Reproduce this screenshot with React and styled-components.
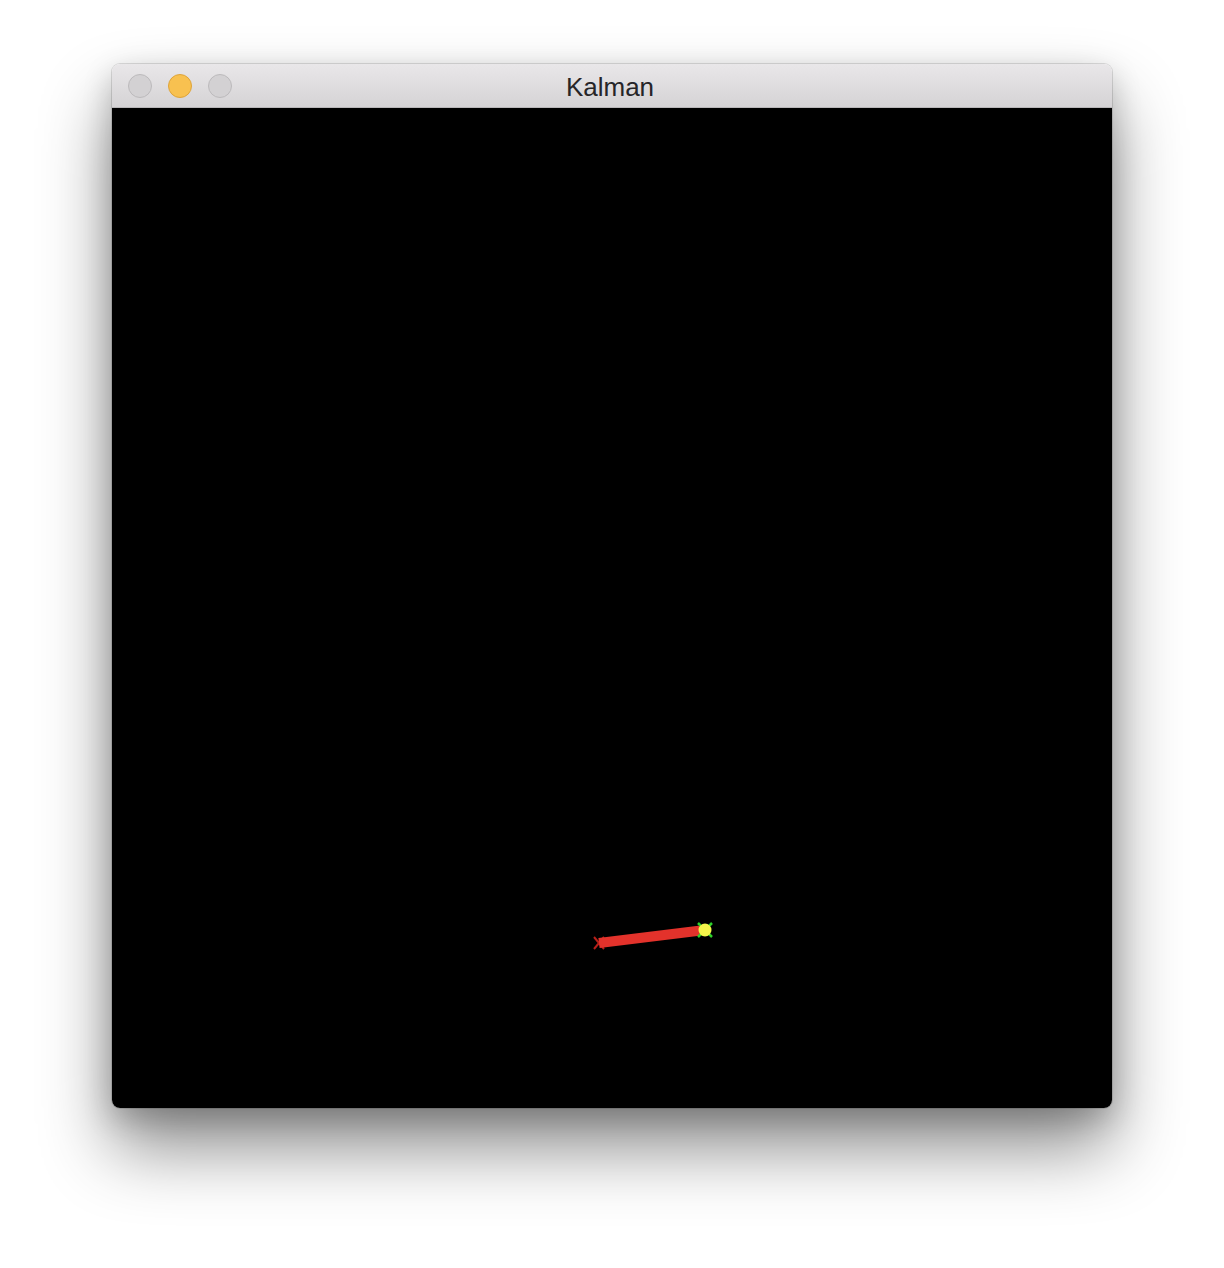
import React from "react";
import styled, { createGlobalStyle } from "styled-components";

const Global = createGlobalStyle`
  html, body { margin: 0; padding: 0; background: #ffffff; }
  body { font-family: "Liberation Sans", "Open Sans", sans-serif; }
`;

const Page = styled.div`
  width: 1224px;
  height: 1268px;
  padding: 64px 0 0 112px;
  box-sizing: border-box;
  overflow: hidden;
`;

const Window = styled.div`
  width: 1000px;
  border-radius: 8px;
  overflow: hidden;
  box-shadow: 0 0 0 1px rgba(0, 0, 0, 0.12), 0 40px 70px rgba(0, 0, 0, 0.45), 0 10px 30px rgba(0, 0, 0, 0.2);
  display: flex;
  flex-direction: column;
`;

const TitleBar = styled.div`
  height: 43px;
  background: linear-gradient(#e9e7e9, #d5d3d5);
  border-bottom: 1px solid #b9b7b9;
  position: relative;
  display: flex;
  align-items: center;
  justify-content: center;
`;

const Lights = styled.div`
  position: absolute;
  left: 16px;
  top: 10px;
  display: flex;
  gap: 16px;
`;

const Light = styled.span`
  width: 24px;
  height: 24px;
  border-radius: 50%;
  box-sizing: border-box;
  background: ${(p) => (p.$active ? "#f8c150" : "#d3d1d3")};
  border: 1px solid ${(p) => (p.$active ? "#dea43a" : "#bcbabc")};
`;

const Title = styled.div`
  font-family: "Liberation Sans", "Open Sans", sans-serif;
  font-size: 26px;
  color: #262528;
  margin-left: -4px;
  margin-top: 3px;
`;

const Canvas = styled.div`
  height: 1000px;
  background: #000;
  position: relative;
`;

const Drawing = styled.svg`
  position: absolute;
  left: 0;
  top: 0;
`;

export default function App() {
  const x1 = 487, y1 = 835, x2 = 593, y2 = 822;
  return (
    <>
      <Global />
      <Page>
        <Window>
          <TitleBar>
            <Lights>
              <Light />
              <Light $active />
              <Light />
            </Lights>
            <Title>Kalman</Title>
          </TitleBar>
          <Canvas>
            <Drawing width="1000" height="1000" viewBox="0 0 1000 1000">
              <g stroke="#b8201a" strokeWidth="2">
                <line x1={x1 - 5} y1={y1 - 6} x2={x1 + 5} y2={y1 + 6} />
                <line x1={x1 - 5} y1={y1 + 6} x2={x1 + 5} y2={y1 - 6} />
              </g>
              <line x1={x1} y1={y1} x2={x2 - 4} y2={y2 + 0.5} stroke="#e3322b" strokeWidth="10" />
              <g stroke="#2fd12a" strokeWidth="2.5">
                <line x1={x2 - 7} y1={y2 - 7} x2={x2 + 7} y2={y2 + 7} />
                <line x1={x2 - 7} y1={y2 + 7} x2={x2 + 7} y2={y2 - 7} />
              </g>
              <circle cx={x2} cy={y2} r="6.5" fill="#f4f54a" />
            </Drawing>
          </Canvas>
        </Window>
      </Page>
    </>
  );
}
